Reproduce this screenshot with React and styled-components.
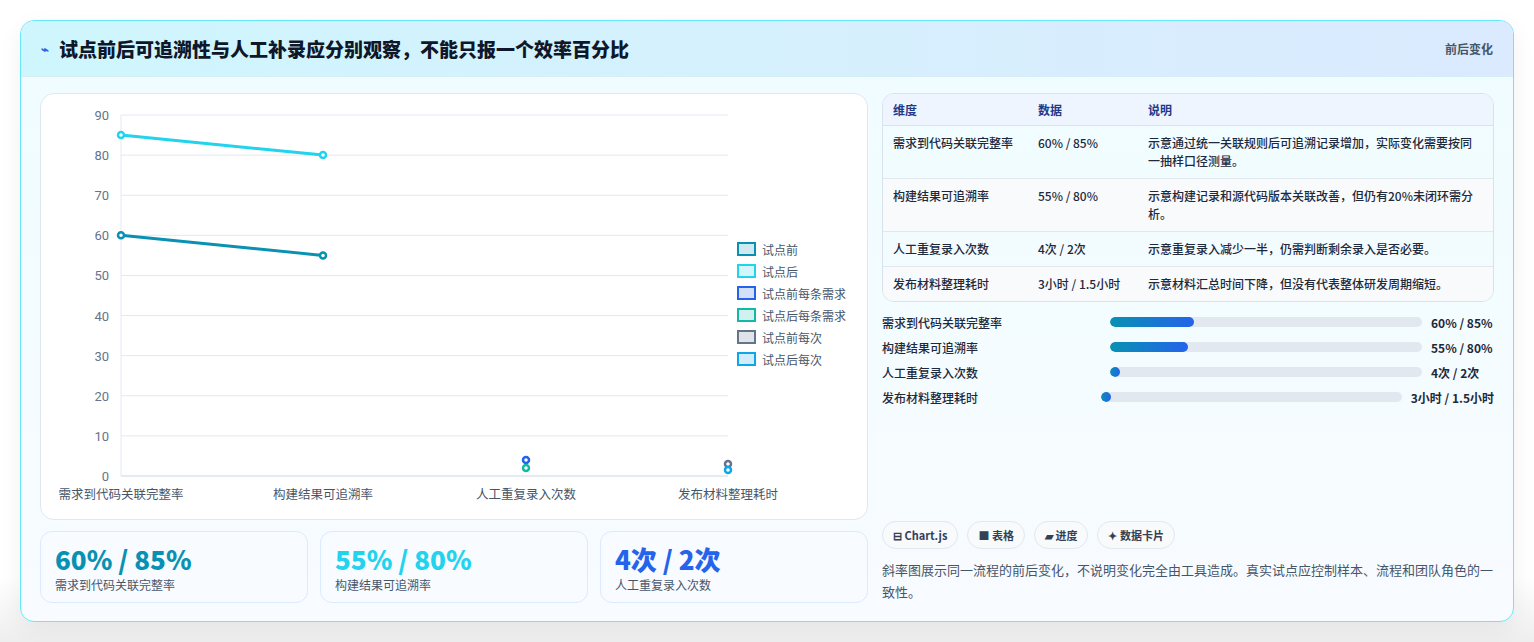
import React from "react";
import styled, { createGlobalStyle } from "styled-components";

const GlobalStyle = createGlobalStyle`
  body {
    margin: 0;
    background: #ffffff;
    font-family: "Noto Sans CJK SC", "Noto Sans", sans-serif;
  }
`;

const rows = [
  { name: "需求到代码关联完整率", data: "60% / 85%", note: "示意通过统一关联规则后可追溯记录增加，实际变化需要按同一抽样口径测量。", fill: 27 },
  { name: "构建结果可追溯率", data: "55% / 80%", note: "示意构建记录和源代码版本关联改善，但仍有20%未闭环需分析。", fill: 25 },
  { name: "人工重复录入次数", data: "4次 / 2次", note: "示意重复录入减少一半，仍需判断剩余录入是否必要。", fill: 0 },
  { name: "发布材料整理耗时", data: "3小时 / 1.5小时", note: "示意材料汇总时间下降，但没有代表整体研发周期缩短。", fill: 0 },
];

const legend = [
  { label: "试点前", color: "#0891b2" },
  { label: "试点后", color: "#22d3ee" },
  { label: "试点前每条需求", color: "#2563eb" },
  { label: "试点后每条需求", color: "#14b8a6" },
  { label: "试点前每次", color: "#64748b" },
  { label: "试点后每次", color: "#0ea5e9" },
];

const kpis = [
  { value: "60% / 85%", label: "需求到代码关联完整率", color: "#0891b2" },
  { value: "55% / 80%", label: "构建结果可追溯率", color: "#22d3ee" },
  { value: "4次 / 2次", label: "人工重复录入次数", color: "#2563eb" },
];

const Page = styled.div`
  padding: 20px;
  background: linear-gradient(#fff 90%, #eeeeee);
`;

const Card = styled.section`
  border: 1px solid #67e8f9;
  border-radius: 14px;
  overflow: hidden;
  background: linear-gradient(180deg, #effdff, #f8fbff);
  box-shadow: 0 8px 24px rgba(15, 23, 42, 0.06);
`;

const Header = styled.header`
  height: 55px;
  display: flex;
  align-items: center;
  justify-content: space-between;
  padding: 0 20px;
  background: linear-gradient(90deg, #cff6fd, #dbeafe);
  border-bottom: 1px solid #d7eef6;
`;

const Title = styled.h1`
  margin: 0;
  font-size: 19px;
  font-weight: 800;
  color: #0f172a;
  display: flex;
  align-items: center;
  gap: 10px;
`;

const Icon = styled.span`
  color: #2563eb;
  font-size: 13px;
`;

const Tag = styled.span`
  font-size: 12px;
  font-weight: 700;
  color: #475569;
`;

const Body = styled.div`
  display: grid;
  grid-template-columns: 828px 1fr;
  gap: 14px;
  padding: 16px 19px 18px 19px;
`;

const Left = styled.div`
  display: flex;
  flex-direction: column;
  gap: 11px;
`;

const ChartPanel = styled.div`
  height: 425px;
  background: #fff;
  border: 1px solid #dfe7f1;
  border-radius: 14px;
  position: relative;
`;

const KpiRow = styled.div`
  display: grid;
  grid-template-columns: repeat(3, 1fr);
  gap: 12px;
`;

const Kpi = styled.div`
  height: 72px;
  box-sizing: border-box;
  padding: 10px 14px;
  border: 1px solid #dbeafe;
  border-radius: 12px;
  background: #f8fbff;
`;

const KpiValue = styled.div`
  font-size: 26px;
  font-weight: 800;
  line-height: 34px;
  color: ${(p) => p.$color};
`;

const KpiLabel = styled.div`
  font-size: 12px;
  color: #475569;
`;

const Right = styled.div`
  display: flex;
  flex-direction: column;
`;

const Table = styled.table`
  width: 100%;
  border-collapse: separate;
  border-spacing: 0;
  border: 1px solid #d8e2ee;
  border-radius: 12px;
  overflow: hidden;
  font-size: 12px;
  color: #1e293b;
  th {
    text-align: left;
    font-weight: 700;
    color: #1e3a8a;
    background: #eef5ff;
    height: 31px;
    padding: 0 10px;
    border-bottom: 1px solid #d8e2ee;
  }
  td {
    padding: 8px 10px;
    line-height: 18px;
    font-weight: 500;
    vertical-align: top;
    border-bottom: 1px solid #e2e8f0;
  }
  tr:nth-child(even) td { background: #f8fafc; }
  tr:last-child td { border-bottom: none; }
`;

const Bars = styled.div`
  display: flex;
  flex-direction: column;
  gap: 7px;
  margin-top: 11px;
`;

const BarRow = styled.div`
  display: flex;
  align-items: center;
  gap: 9px;
  height: 18px;
  font-size: 12px;
  font-weight: 500;
  color: #1e293b;
`;

const BarLabel = styled.span`
  width: ${(p) => (p.$wide ? "210px" : "219px")};
  flex-shrink: 0;
`;

const Track = styled.div`
  flex: 1;
  height: 10px;
  border-radius: 5px;
  background: #e2e8f0;
  overflow: hidden;
`;

const Fill = styled.div`
  height: 100%;
  min-width: 10px;
  border-radius: 5px;
  background: linear-gradient(90deg, #0891b2, #2563eb);
`;

const BarValue = styled.span`
  font-weight: 700;
  white-space: nowrap;
  min-width: 63px;
`;

const Chips = styled.div`
  display: flex;
  gap: 9px;
  margin-top: auto;
`;

const Chip = styled.span`
  height: 28px;
  box-sizing: border-box;
  padding: 0 10px;
  display: inline-flex;
  align-items: center;
  gap: 4px;
  border: 1px solid #e2e8f0;
  border-radius: 14px;
  background: #f8fafc;
  font-size: 11px;
  font-weight: 700;
  color: #334155;
`;

const Note = styled.p`
  margin: 10px 0 0;
  font-size: 13px;
  line-height: 22px;
  color: #475569;
`;

const LegendList = styled.div`
  position: absolute;
  left: 696px;
  top: 147px;
  display: flex;
  flex-direction: column;
  gap: 6px;
`;

const LegendItem = styled.div`
  display: flex;
  align-items: center;
  gap: 6px;
  font-size: 12px;
  color: #475569;
  height: 16px;
`;

const Swatch = styled.span`
  width: 15px;
  height: 10px;
  border: 2px solid ${(p) => p.$color};
  background: ${(p) => p.$color}33;
`;

const X = [80, 282, 485, 687];
const yOf = (v) => 21 + (90 - v) * (361 / 90);
const cats = ["需求到代码关联完整率", "构建结果可追溯率", "人工重复录入次数", "发布材料整理耗时"];

function Chart() {
  const dot = (x, v, c, k) => (
    <circle key={k} cx={x} cy={yOf(v)} r="3" fill="#fff" stroke={c} strokeWidth="2.5" />
  );
  return (
    <svg width="827" height="425" style={{ display: "block" }}>
      {[0, 10, 20, 30, 40, 50, 60, 70, 80, 90].map((v) => (
        <g key={v}>
          <line x1="80" x2="687" y1={yOf(v)} y2={yOf(v)} stroke={v === 0 ? "#cbd5e1" : "#e2e8f0"} />
          <text x="68" y={yOf(v) + 5} textAnchor="end" fontSize="13" fill="#64748b" fontFamily="Roboto, sans-serif">{v}</text>
        </g>
      ))}
      <line x1="80" x2="80" y1="21" y2="382" stroke="#e2e8f0" />
      {cats.map((c, i) => (
        <text key={c} x={X[i]} y="405" textAnchor="middle" fontSize="12.5" fill="#475569" fontFamily="Noto Sans CJK SC, sans-serif">{c}</text>
      ))}
      <line x1={X[0]} y1={yOf(85)} x2={X[1]} y2={yOf(80)} stroke="#22d3ee" strokeWidth="3" />
      <line x1={X[0]} y1={yOf(60)} x2={X[1]} y2={yOf(55)} stroke="#0891b2" strokeWidth="3" />
      {dot(X[0], 85, "#22d3ee", 1)}
      {dot(X[1], 80, "#22d3ee", 2)}
      {dot(X[0], 60, "#0891b2", 3)}
      {dot(X[1], 55, "#0891b2", 4)}
      {dot(X[2], 4, "#2563eb", 5)}
      {dot(X[2], 2, "#14b8a6", 6)}
      {dot(X[3], 3, "#64748b", 7)}
      {dot(X[3], 1.5, "#0ea5e9", 8)}
    </svg>
  );
}

export default function App() {
  return (
    <Page>
      <GlobalStyle />
      <Card>
        <Header>
          <Title><Icon>⌁</Icon>试点前后可追溯性与人工补录应分别观察，不能只报一个效率百分比</Title>
          <Tag>前后变化</Tag>
        </Header>
        <Body>
          <Left>
            <ChartPanel>
              <Chart />
              <LegendList>
                {legend.map((l) => (
                  <LegendItem key={l.label}><Swatch $color={l.color} />{l.label}</LegendItem>
                ))}
              </LegendList>
            </ChartPanel>
            <KpiRow>
              {kpis.map((k) => (
                <Kpi key={k.label}>
                  <KpiValue $color={k.color}>{k.value}</KpiValue>
                  <KpiLabel>{k.label}</KpiLabel>
                </Kpi>
              ))}
            </KpiRow>
          </Left>
          <Right>
            <Table>
              <thead>
                <tr><th style={{ width: 125 }}>维度</th><th style={{ width: 90 }}>数据</th><th>说明</th></tr>
              </thead>
              <tbody>
                {rows.map((r) => (
                  <tr key={r.name}><td>{r.name}</td><td>{r.data}</td><td>{r.note}</td></tr>
                ))}
              </tbody>
            </Table>
            <Bars>
              {rows.map((r, i) => (
                <BarRow key={r.name}>
                  <BarLabel $wide={i === 3}>{r.name}</BarLabel>
                  <Track><Fill style={{ width: `${r.fill}%` }} /></Track>
                  <BarValue>{r.data}</BarValue>
                </BarRow>
              ))}
            </Bars>
            <Chips>
              <Chip>⊟ Chart.js</Chip>
              <Chip>■ 表格</Chip>
              <Chip>▰ 进度</Chip>
              <Chip>✦ 数据卡片</Chip>
            </Chips>
            <Note>斜率图展示同一流程的前后变化，不说明变化完全由工具造成。真实试点应控制样本、流程和团队角色的一致性。</Note>
          </Right>
        </Body>
      </Card>
    </Page>
  );
}
